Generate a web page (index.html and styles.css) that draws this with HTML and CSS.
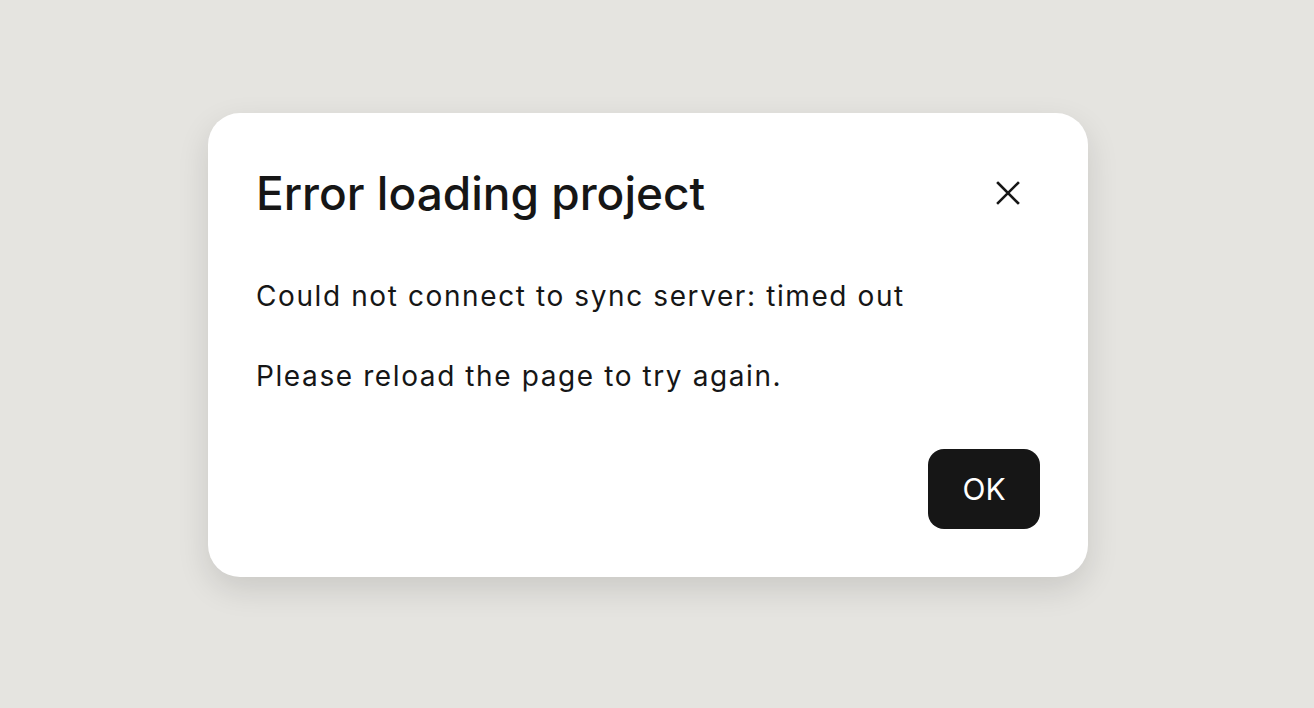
FILE: index.html
```html
<!DOCTYPE html>
<html lang="en">
<head>
    <meta charset="UTF-8">
    <meta name="viewport" content="width=device-width, initial-scale=1.0">
    <title>Error loading project</title>
    <link rel="stylesheet" href="styles.css">
</head>
<body>
    <div class="overlay">
        <div class="dialog" role="alertdialog" aria-labelledby="dialogTitle">
            <div class="dialog-header">
                <h1 id="dialogTitle">Error loading project</h1>
                <button class="close-btn" aria-label="Close">
                    <svg width="24" height="24" viewBox="0 0 24 24" fill="none" stroke="#161616" stroke-width="2.6" stroke-linecap="square">
                        <path d="M2 2L22 22M22 2L2 22"/>
                    </svg>
                </button>
            </div>
            <p>Could not connect to sync server: timed out</p>
            <p>Please reload the page to try again.</p>
            <div class="dialog-footer">
                <button class="ok-btn">OK</button>
            </div>
        </div>
    </div>
</body>
</html>
```

FILE: styles.css
```css
    body {
        font-family: Inter, "Noto Sans", sans-serif;
        background-color: #e5e4e0;
        color: #161616;
        margin: 0;
        padding: 0;
        height: 100vh;
    }

    .overlay {
        padding: 113px 0 0 208px;
    }

    .dialog {
        width: 880px;
        height: 464px;
        box-sizing: border-box;
        background-color: #fff;
        border-radius: 32px;
        padding: 48px;
        box-shadow: 0 12px 32px rgba(0, 0, 0, 0.12);
        display: flex;
        flex-direction: column;
    }

    .dialog-header {
        display: flex;
        justify-content: space-between;
        align-items: center;
        margin-bottom: 51px;
    }

    h1 {
        margin: 0;
        font-size: 46px;
        font-weight: 500;
        letter-spacing: 0;
        line-height: 64px;
    }

    .close-btn {
        width: 48px;
        height: 48px;
        margin-right: 8px;
        border: none;
        background: none;
        padding: 0;
        display: flex;
        align-items: center;
        justify-content: center;
        cursor: pointer;
    }

    p {
        margin: 0 0 40px;
        font-size: 28px;
        line-height: 40px;
        letter-spacing: 1.6px;
    }

    .dialog-footer {
        margin-top: auto;
        display: flex;
        justify-content: flex-end;
    }

    .ok-btn {
        width: 112px;
        height: 80px;
        background-color: #161616;
        color: #fff;
        border: none;
        border-radius: 16px;
        font-family: inherit;
        font-size: 30px;
        cursor: pointer;
    }
```
